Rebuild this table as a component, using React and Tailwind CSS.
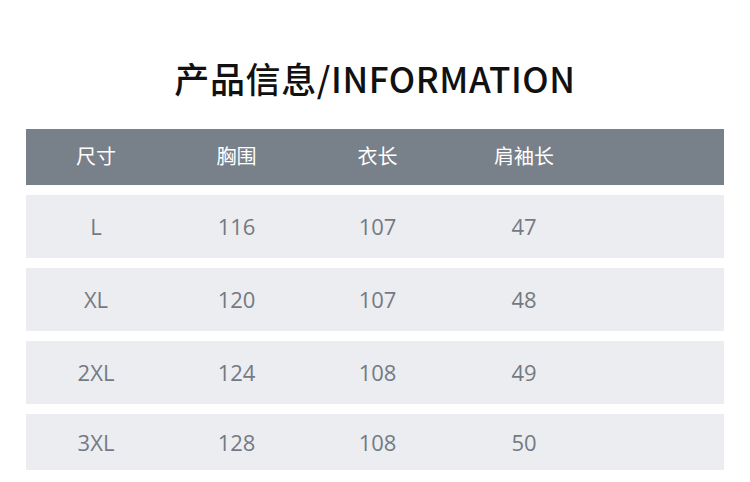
import React from 'react';

const rows = [
  ['L', '116', '107', '47'],
  ['XL', '120', '107', '48'],
  ['2XL', '124', '108', '49'],
  ['3XL', '128', '108', '50'],
];

const cols = ['w-[140px]', 'w-[141px]', 'w-[141px]', 'w-[152px]'];

export default function App() {
  return (
    <div
      className="w-[750px] h-[482px] bg-white overflow-hidden"
      style={{ fontFamily: '"Open Sans", "Noto Sans CJK SC", sans-serif' }}
    >
      {/* title */}
      <div className="pt-[55px] h-[129px] flex justify-center">
        <h1
          className="text-[35px] leading-[46px] font-medium text-[#111] tracking-[0.6px]"
          style={{ fontFamily: '"Noto Sans CJK SC", sans-serif' }}
        >
          产品信息/INFORMATION
        </h1>
      </div>

      {/* table */}
      <div className="mx-[26px] flex flex-col gap-[10px]">
        <div className="h-[56px] bg-[#78808a] flex items-center text-white text-[20px]">
          {['尺寸', '胸围', '衣长', '肩袖长'].map((h, i) => (
            <div key={h} className={`${cols[i]} text-center`}>{h}</div>
          ))}
        </div>
        <div className="flex flex-col gap-[10px]">
          {rows.map((r, ri) => (
            <div
              key={ri}
              className={`${ri === 3 ? 'h-[56px]' : 'h-[63px]'} bg-[#ecedf0] flex items-center text-[#737a84] text-[22px]`}
            >
              {r.map((c, i) => (
                <div key={i} className={`${cols[i]} text-center`}>{c}</div>
              ))}
            </div>
          ))}
        </div>
      </div>
    </div>
  );
}
